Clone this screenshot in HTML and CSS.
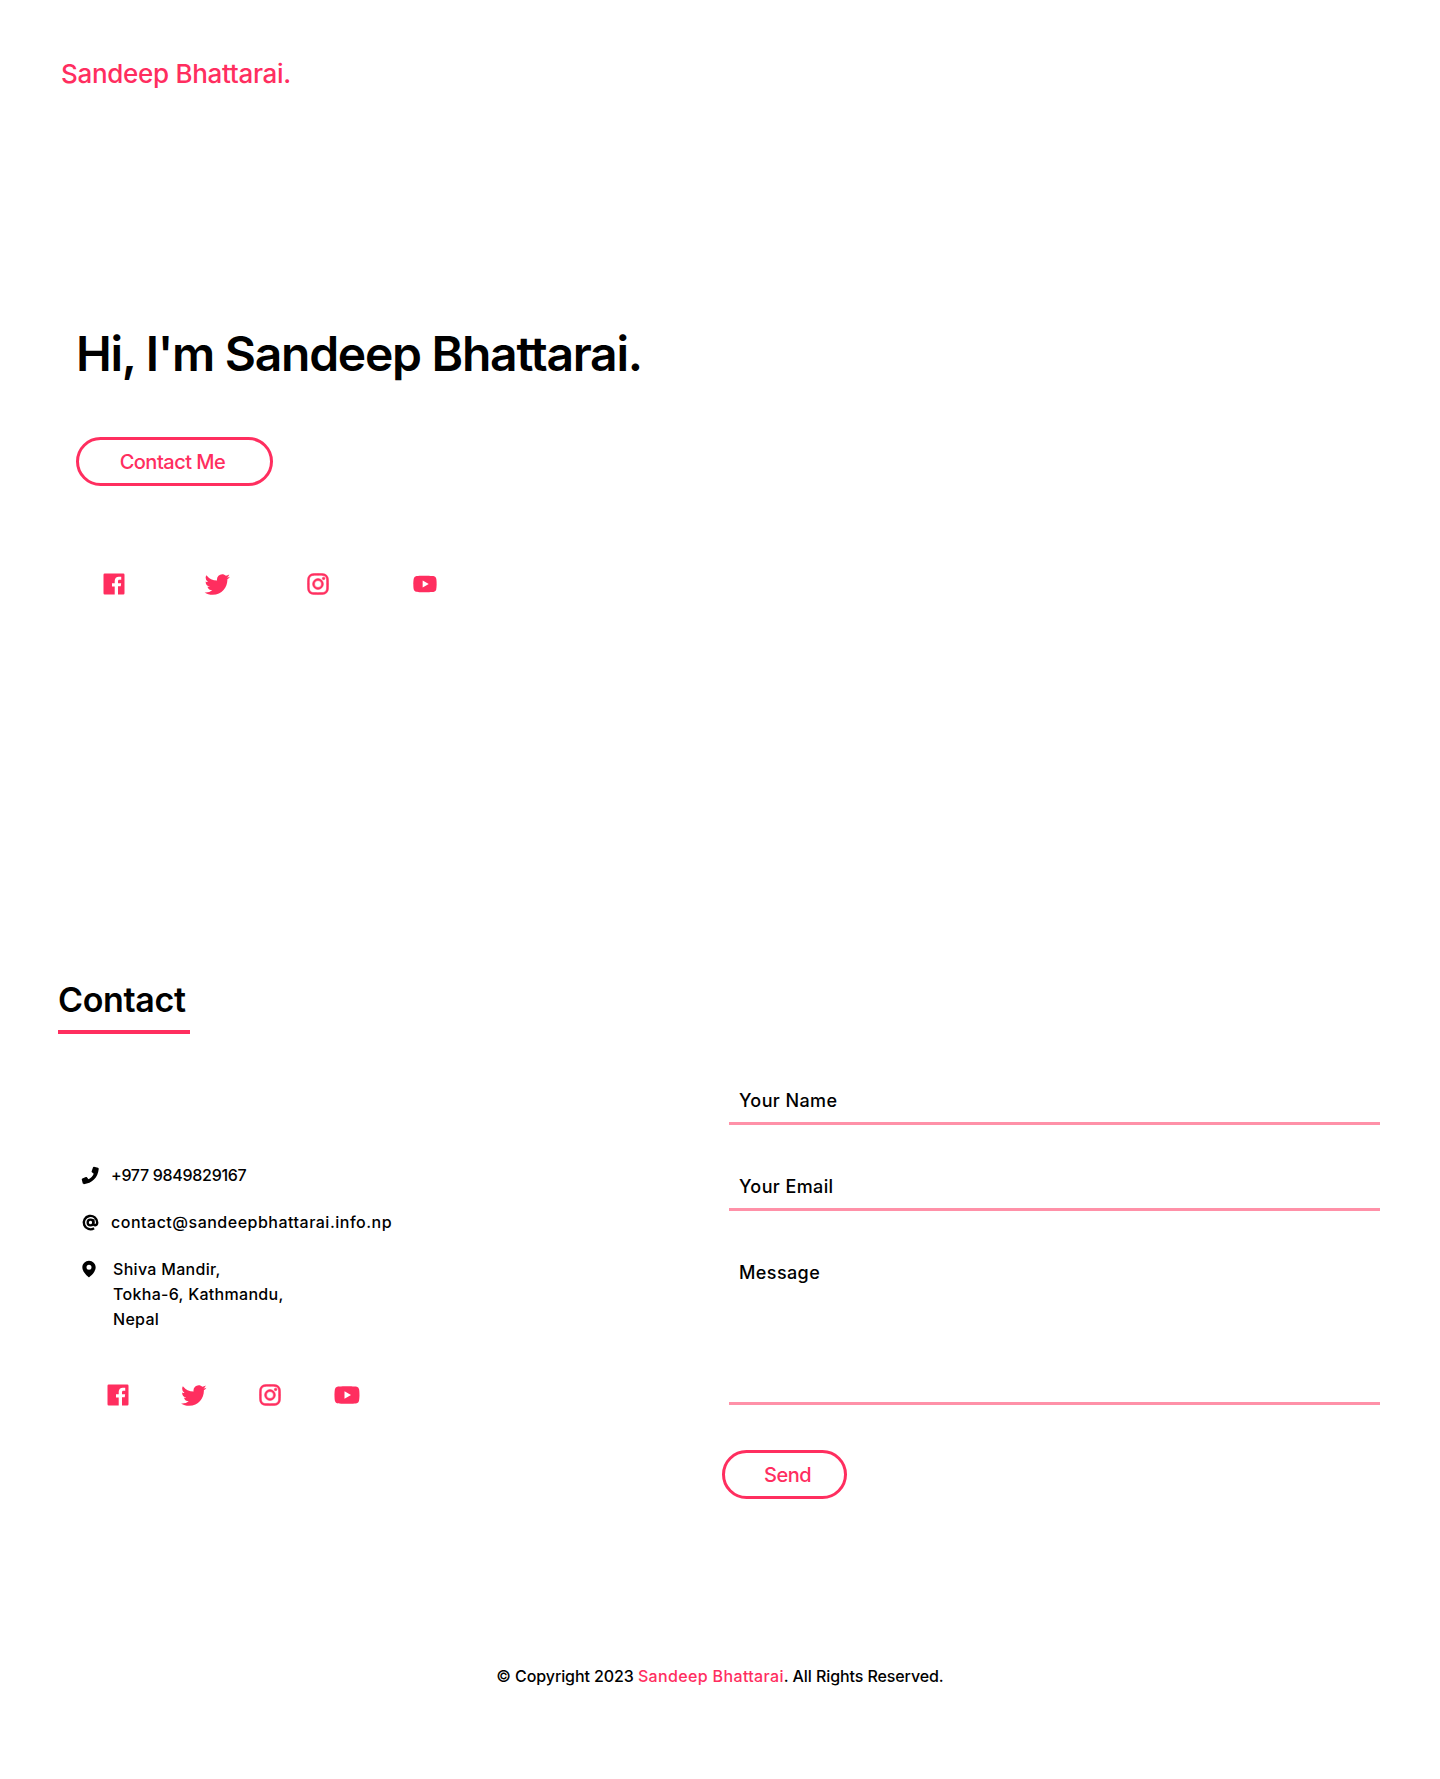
FILE: index.html
```html
<!DOCTYPE html>
<html lang="en">

<head>
    <meta charset="UTF-8">
    <meta name="viewport" content="width=device-width, initial-scale=1.0">
    <title>Sandeep Bhattarai</title>
    <link rel="stylesheet" href="styles.css">
</head>

<body>
    <header class="topBar">
        <a href="#" class="logo">Sandeep Bhattarai.</a>
    </header>

    <section class="hero">
        <h1>Hi, I'm Sandeep Bhattarai.</h1>
        <a href="#contact" class="btn btnHero">Contact Me</a>
        <div class="socials socialsHero">
            <a href="#"><svg viewBox="0 0 24 24"><use href="#icoFacebook"></use></svg></a>
            <a href="#"><svg class="twIcon" viewBox="0 0 24 24"><use href="#icoTwitter"></use></svg></a>
            <a href="#"><svg class="igIcon" viewBox="0 0 24 24"><use href="#icoInstagram"></use></svg></a>
            <a href="#" class="ytLink"><svg viewBox="0 0 24 24"><use href="#icoYoutube"></use></svg></a>
        </div>
    </section>

    <section class="contact" id="contact">
        <h2>Contact</h2>
        <div class="contactGrid">
            <div class="contactInfo">
                <div class="infoRow infoPhone">
                    <svg class="icoPhone" viewBox="0 0 24 24"><path d="M16 2l4.5 1.2c.6.2 1 .8.9 1.4C20.5 14.5 13.5 21 4.5 21.9c-.7 0-1.3-.4-1.4-1L2 16.5c-.1-.5.2-1 .7-1.2l4-1.6c.4-.2.9 0 1.2.3l1.8 2.2c2.8-1.4 4.8-3.5 6-6.2L13.6 8.4c-.4-.3-.5-.8-.3-1.2l1.5-4.4c.2-.5.7-.9 1.2-.8z"></path></svg>
                    <span>+977 9849829167</span>
                </div>
                <div class="infoRow infoEmail">
                    <svg class="icoAt" viewBox="0 0 24 24"><circle cx="12" cy="12" r="3.6"></circle><path d="M15.6 8v5.4c0 3 4.9 3 4.9-1.4A8.5 8.5 0 1 0 16.5 19.3"></path></svg>
                    <span>contact@sandeepbhattarai.info.np</span>
                </div>
                <div class="infoRow infoAddress">
                    <svg class="icoPin" viewBox="0 0 24 24"><path d="M12 2C7.6 2 4 5.6 4 10c0 6.4 7.7 11.8 8 12 0 0 8-5.6 8-12 0-4.4-3.6-8-8-8zm0 11a3 3 0 1 1 0-6 3 3 0 0 1 0 6z"></path></svg>
                    <span>Shiva Mandir,<br>Tokha-6, Kathmandu,<br>Nepal</span>
                </div>
                <div class="socials socialsContact">
                    <a href="#"><svg viewBox="0 0 24 24"><use href="#icoFacebook"></use></svg></a>
                    <a href="#"><svg class="twIcon" viewBox="0 0 24 24"><use href="#icoTwitter"></use></svg></a>
                    <a href="#"><svg class="igIcon" viewBox="0 0 24 24"><use href="#icoInstagram"></use></svg></a>
                    <a href="#"><svg class="ytBig" viewBox="0 0 24 24"><use href="#icoYoutube"></use></svg></a>
                </div>
            </div>

            <form class="contactForm">
                <div class="field">
                    <input type="text" id="nameInput">
                    <label for="nameInput">Your Name</label>
                </div>
                <div class="field">
                    <input type="email" id="emailInput">
                    <label for="emailInput">Your Email</label>
                </div>
                <div class="field">
                    <textarea id="messageInput"></textarea>
                    <label for="messageInput">Message</label>
                </div>
                <button type="button" class="btn btnSend">Send</button>
            </form>
        </div>
    </section>

    <footer class="footer">
        <p>© Copyright 2023 <a href="#">Sandeep Bhattarai</a>. All Rights Reserved.</p>
    </footer>

    <svg class="iconDefs">
        <symbol id="icoFacebook" viewBox="0 0 24 24">
            <path d="M20 3H4a1 1 0 0 0-1 1v16a1 1 0 0 0 1 1h8.615v-6.96h-2.338v-2.725h2.338v-2c0-2.325 1.42-3.592 3.5-3.592.699-.002 1.399.034 2.095.107v2.42h-1.435c-1.128 0-1.348.538-1.348 1.325v1.735h2.697l-.35 2.725h-2.348V21H20a1 1 0 0 0 1-1V4a1 1 0 0 0-1-1z"></path>
        </symbol>
        <symbol id="icoTwitter" viewBox="0 0 24 24">
            <path d="M19.633 7.997c.013.175.013.349.013.523 0 5.325-4.053 11.461-11.46 11.461-2.282 0-4.402-.661-6.186-1.809.324.037.636.05.973.05a8.07 8.07 0 0 0 5.001-1.721 4.036 4.036 0 0 1-3.767-2.793c.249.037.499.062.761.062.361 0 .724-.05 1.061-.137a4.027 4.027 0 0 1-3.23-3.953v-.05c.537.299 1.16.486 1.82.511a4.022 4.022 0 0 1-1.796-3.354c0-.748.199-1.434.548-2.032a11.457 11.457 0 0 0 8.306 4.215c-.062-.3-.1-.611-.1-.923a4.026 4.026 0 0 1 4.028-4.028c1.16 0 2.207.486 2.943 1.272a7.957 7.957 0 0 0 2.556-.973 4.02 4.02 0 0 1-1.771 2.22 8.073 8.073 0 0 0 2.319-.624 8.645 8.645 0 0 1-2.019 2.083z"></path>
        </symbol>
        <symbol id="icoInstagram" viewBox="0 0 24 24">
            <path d="M11.999 7.377a4.623 4.623 0 1 0 0 9.248 4.623 4.623 0 0 0 0-9.248zm0 7.627a3.004 3.004 0 1 1 0-6.008 3.004 3.004 0 0 1 0 6.008z"></path>
            <circle cx="16.806" cy="7.207" r="1.078"></circle>
            <path d="M20.533 6.111A4.605 4.605 0 0 0 17.9 3.479a6.606 6.606 0 0 0-2.186-.42c-.963-.042-1.268-.054-3.71-.054s-2.755 0-3.71.054a6.554 6.554 0 0 0-2.184.42 4.6 4.6 0 0 0-2.633 2.632 6.585 6.585 0 0 0-.419 2.186c-.043.962-.056 1.267-.056 3.71 0 2.442 0 2.753.056 3.71.015.748.156 1.486.419 2.187a4.61 4.61 0 0 0 2.634 2.632 6.584 6.584 0 0 0 2.185.45c.963.042 1.268.055 3.71.055s2.755 0 3.71-.055a6.615 6.615 0 0 0 2.186-.419 4.613 4.613 0 0 0 2.633-2.633c.263-.7.404-1.438.419-2.186.043-.962.056-1.267.056-3.71s0-2.753-.056-3.71a6.581 6.581 0 0 0-.421-2.217zm-1.218 9.532a5.043 5.043 0 0 1-.311 1.688 2.987 2.987 0 0 1-1.712 1.711 4.985 4.985 0 0 1-1.67.311c-.95.044-1.218.055-3.654.055-2.438 0-2.687 0-3.655-.055a4.96 4.96 0 0 1-1.669-.311 2.985 2.985 0 0 1-1.719-1.711 5.08 5.08 0 0 1-.311-1.669c-.043-.95-.053-1.218-.053-3.654 0-2.437 0-2.686.053-3.655a5.038 5.038 0 0 1 .311-1.687c.305-.789.93-1.41 1.719-1.712a5.01 5.01 0 0 1 1.669-.311c.951-.043 1.218-.055 3.655-.055s2.687 0 3.654.055a4.96 4.96 0 0 1 1.67.311 2.991 2.991 0 0 1 1.712 1.712 5.08 5.08 0 0 1 .311 1.669c.043.951.054 1.218.054 3.655 0 2.436 0 2.698-.043 3.654h-.011z"></path>
        </symbol>
        <symbol id="icoYoutube" viewBox="0 0 24 24">
            <path d="M21.593 7.203a2.506 2.506 0 0 0-1.762-1.766C18.265 5.007 12 5 12 5s-6.264-.007-7.831.404a2.56 2.56 0 0 0-1.766 1.778c-.413 1.566-.417 4.814-.417 4.814s-.004 3.264.406 4.814c.23.857.905 1.534 1.763 1.765 1.582.43 7.83.437 7.83.437s6.265.007 7.831-.403a2.515 2.515 0 0 0 1.767-1.763c.414-1.565.417-4.812.417-4.812s.02-3.265-.407-4.831zM9.996 15.005l.005-6 5.207 3.005-5.212 2.995z"></path>
        </symbol>
    </svg>
</body>
</html>
```

FILE: styles.css
```css
* {
    box-sizing: border-box;
}

body {
    margin: 0;
    background-color: white;
    color: black;
    font-family: Inter, "Noto Sans", sans-serif;
    min-height: 1779px;
}

a {
    color: inherit;
    text-decoration: none;
}

.iconDefs {
    display: none;
}

.topBar {
    padding: 56px 61px 0;
    height: 318px;
}

.logo {
    display: inline-block;
    font-size: 26px;
    line-height: 36px;
    font-weight: 500;
    letter-spacing: -0.3px;
    color: #ff2e5f;
}

.hero {
    padding-left: 76px;
}

h1 {
    margin: 0 0 47px;
    font-size: 48px;
    line-height: 72px;
    font-weight: 600;
    letter-spacing: -1.27px;
}

.btn {
    display: inline-flex;
    align-items: center;
    justify-content: center;
    height: 49px;
    border: 3px solid #ff2e5f;
    border-radius: 25px;
    background: none;
    color: #ff2e5f;
    font-family: inherit;
    font-size: 20px;
    font-weight: 500;
    letter-spacing: -0.5px;
    cursor: pointer;
}

.btnHero {
    width: 197px;
    padding-right: 4px;
}

.socials {
    display: flex;
    align-items: center;
}

.socials a {
    display: flex;
}

.socials svg {
    width: 28px;
    height: 28px;
    fill: #ff2e5f;
}

.socials .igIcon {
    stroke: #ff2e5f;
    stroke-width: 0.5;
}

.socials .twIcon {
    width: 31px;
    height: 31px;
    margin: -1.5px -2.5px -1.5px -0.5px;
}

.socialsContact .twIcon {
    transform: translateX(-1.5px);
}

.socialsHero {
    margin: 84px 0 0 24px;
    gap: 74px;
}

.ytLink {
    margin-left: 5px;
}

.contact {
    margin-top: 377px;
    padding: 0 60px 0 58px;
}

h2 {
    display: inline-block;
    margin: 0;
    padding: 0 4px 5px 0;
    border-bottom: 4px solid #ff2e5f;
    font-size: 34px;
    line-height: 50px;
    font-weight: 600;
    letter-spacing: -0.35px;
}

.contactGrid {
    display: grid;
    grid-template-columns: 1fr 651px;
    margin-top: 44px;
    padding-left: 22px;
}

.contactInfo {
    padding-top: 85px;
    font-size: 16px;
    line-height: 25px;
    font-weight: 500;
}

.infoRow {
    display: flex;
    align-items: center;
    gap: 10px;
    margin-bottom: 22px;
}

.infoRow svg {
    flex-shrink: 0;
}

.infoPhone span {
    letter-spacing: -0.3px;
}

.infoEmail span {
    letter-spacing: 0.5px;
}

.icoPhone {
    width: 21px;
    height: 21px;
}

.icoAt {
    width: 21px;
    height: 21px;
    padding: 1px;
    fill: none;
    stroke: black;
    stroke-width: 3;
}

.infoAddress {
    align-items: flex-start;
    gap: 14px;
    margin: 22px 0 0;
    letter-spacing: 0.3px;
}

.icoPin {
    width: 20px;
    height: 20px;
    margin: 2px 0 0 -1px;
}

.socialsContact {
    margin: 48px 0 0 24px;
    gap: 48px;
}

.socials .ytBig {
    width: 30px;
    height: 30px;
}

.contactForm {
    display: flex;
    flex-direction: column;
    align-items: flex-start;
}

.field {
    position: relative;
    width: 100%;
    margin-bottom: 39px;
}

.field input,
.field textarea {
    display: block;
    width: 100%;
    height: 47px;
    padding: 0 10px;
    border: none;
    border-bottom: 3px solid #ff91a8;
    outline: none;
    background: none;
    font: inherit;
    resize: none;
}

.field textarea {
    height: 155px;
}

.field label {
    position: absolute;
    top: 11px;
    left: 10px;
    font-size: 18px;
    line-height: 24px;
    font-weight: 500;
    letter-spacing: 0.4px;
}

.btnSend {
    width: 125px;
    margin: 6px 0 0 -7px;
    padding-left: 12px;
}

.footer {
    margin-top: 165px;
    text-align: center;
    font-size: 16px;
    line-height: 24px;
    font-weight: 500;
    letter-spacing: -0.09px;
}

.footer p {
    margin: 0;
}

.footer a {
    color: #ff2e5f;
    letter-spacing: 0.35px;
}
```
